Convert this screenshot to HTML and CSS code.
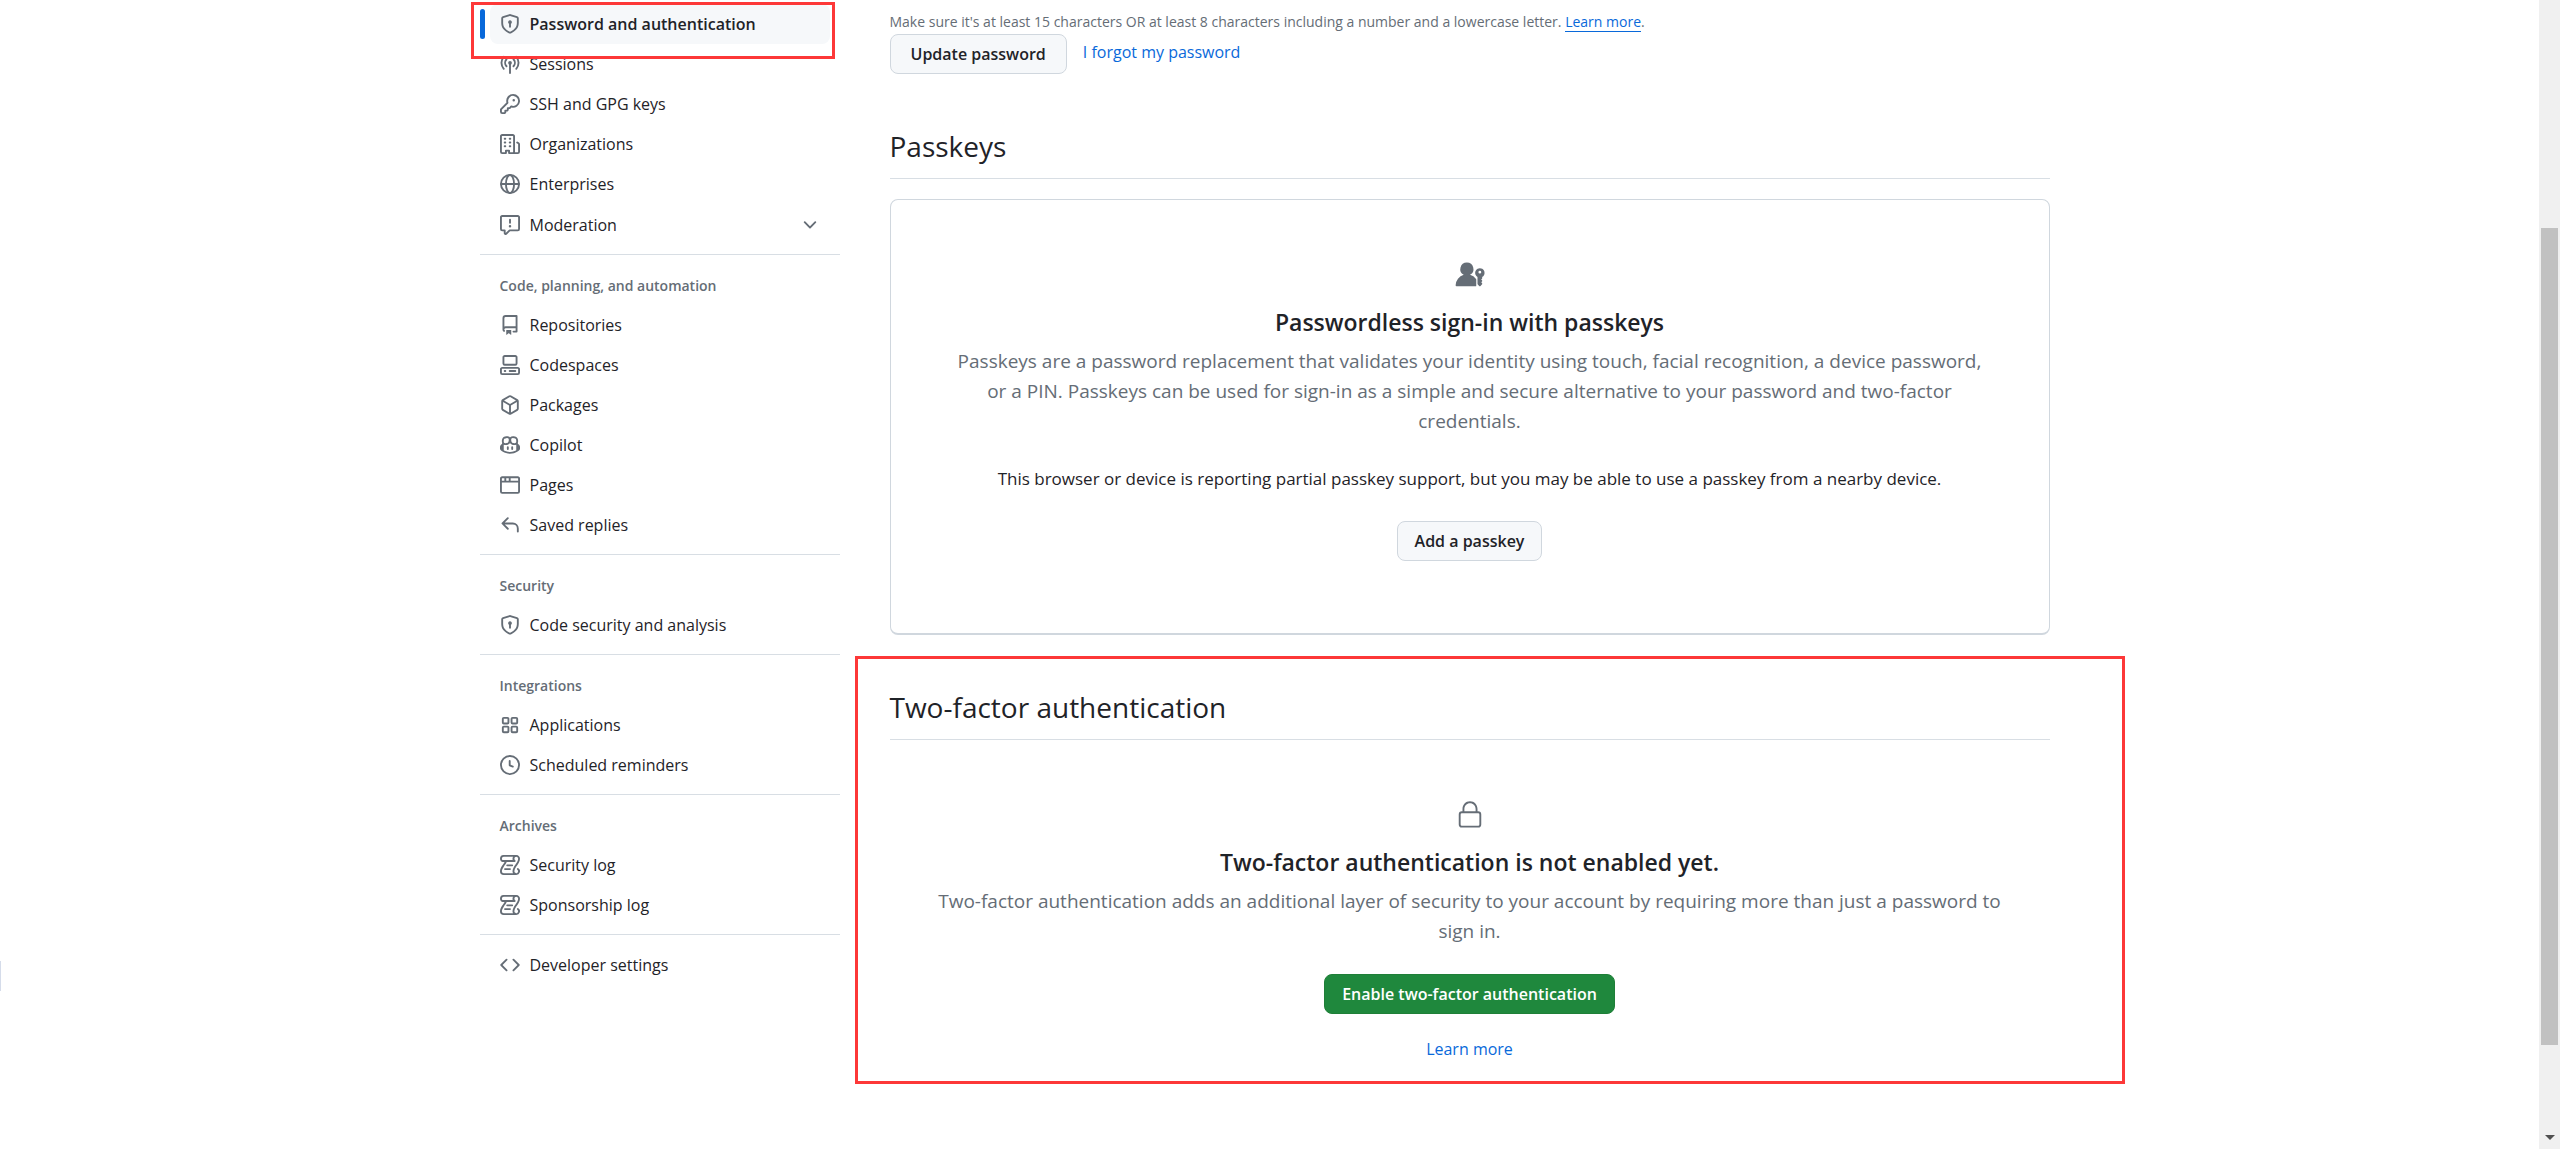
FILE: index.html
```html
<!DOCTYPE html>
<html lang="en">
<head>
    <meta charset="UTF-8">
    <meta name="viewport" content="width=device-width, initial-scale=1.0">
    <title>Password and authentication</title>
    <link rel="stylesheet" href="styles.css">
</head>
<body>
    <div class="page">
        <div class="edge-tab"></div>
        <div class="layout">
            <nav class="sidebar" aria-label="Settings">
                <div class="highlight highlight-nav"></div>
                <ul class="nav-list">
                    <li class="active">
                        <a class="nav-item" href="#">
                            <svg class="icon" viewBox="0 0 16 16"><path d="m8.533.133 5.25 1.68A1.75 1.75 0 0 1 15 3.48V7c0 1.566-.32 3.182-1.303 4.682-.983 1.498-2.585 2.813-5.032 3.855a1.697 1.697 0 0 1-1.33 0c-2.447-1.042-4.049-2.357-5.032-3.855C1.32 10.182 1 8.566 1 7V3.48a1.755 1.755 0 0 1 1.217-1.667l5.25-1.68a1.748 1.748 0 0 1 1.066 0Zm-.61 1.429.001.001-5.25 1.68a.251.251 0 0 0-.174.237V7c0 1.36.275 2.666 1.057 3.859.784 1.194 2.121 2.342 4.366 3.298a.196.196 0 0 0 .154 0c2.245-.957 3.582-2.103 4.366-3.297C13.225 9.666 13.5 8.358 13.5 7V3.48a.25.25 0 0 0-.174-.238l-5.25-1.68a.25.25 0 0 0-.153 0ZM9.5 6.5c0 .536-.286 1.032-.75 1.3v2.45a.75.75 0 0 1-1.5 0V7.8A1.5 1.5 0 1 1 9.5 6.5Z"/></svg>
                            Password and authentication
                        </a>
                    </li>
                    <li>
                        <a class="nav-item" href="#">
                            <svg class="icon line" viewBox="0 0 16 16"><path d="M3 2.2a7.2 7.2 0 0 0 0 9.6M13 2.2a7.2 7.2 0 0 1 0 9.6M5.2 4.2a4.1 4.1 0 0 0 0 5.6M10.8 4.2a4.1 4.1 0 0 1 0 5.6M8 7.5v7.7"/><circle class="solid" cx="8" cy="7" r="1.5"/></svg>
                            Sessions
                        </a>
                    </li>
                    <li>
                        <a class="nav-item" href="#">
                            <svg class="icon" viewBox="0 0 16 16"><path d="M10.5 0a5.499 5.499 0 1 1-1.288 10.848l-.932.932a.749.749 0 0 1-.53.22H7v.75a.749.749 0 0 1-.22.53l-.5.5a.749.749 0 0 1-.53.22H5v.75a.749.749 0 0 1-.22.53l-.5.5a.749.749 0 0 1-.53.22h-2A1.75 1.75 0 0 1 0 14.25v-2c0-.199.079-.389.22-.53l4.932-4.932A5.5 5.5 0 0 1 10.5 0Zm-4 5.5c-.001.431.069.86.205 1.269a.75.75 0 0 1-.181.768L1.5 12.56v1.69c0 .138.112.25.25.25h1.69l.06-.06v-1.19a.75.75 0 0 1 .75-.75h1.19l.06-.06v-1.19a.75.75 0 0 1 .75-.75h1.19l1.023-1.025a.75.75 0 0 1 .768-.18A4 4 0 1 0 6.5 5.5ZM11 6a1 1 0 1 1 0-2 1 1 0 0 1 0 2Z"/></svg>
                            SSH and GPG keys
                        </a>
                    </li>
                    <li>
                        <a class="nav-item" href="#">
                            <svg class="icon" viewBox="0 0 16 16"><path d="M1.75 16A1.75 1.75 0 0 1 0 14.25V1.75C0 .784.784 0 1.75 0h8.5C11.216 0 12 .784 12 1.75v12.5c0 .085-.006.168-.018.25h2.268a.25.25 0 0 0 .25-.25V8.285a.25.25 0 0 0-.111-.208l-1.055-.703a.749.749 0 1 1 .832-1.248l1.055.703c.487.325.779.871.779 1.456v5.965A1.75 1.75 0 0 1 14.25 16h-3.5a.766.766 0 0 1-.197-.026c-.099.017-.2.026-.303.026h-3a.75.75 0 0 1-.75-.75V14h-1v1.25a.75.75 0 0 1-.75.75Zm-.25-1.75c0 .138.112.25.25.25H4v-1.25a.75.75 0 0 1 .75-.75h2.5a.75.75 0 0 1 .75.75v1.25h2.25a.25.25 0 0 0 .25-.25V1.75a.25.25 0 0 0-.25-.25h-8.5a.25.25 0 0 0-.25.25ZM3.75 6h.5a.75.75 0 0 1 0 1.5h-.5a.75.75 0 0 1 0-1.5ZM3 3.75A.75.75 0 0 1 3.75 3h.5a.75.75 0 0 1 0 1.5h-.5A.75.75 0 0 1 3 3.75Zm4 3A.75.75 0 0 1 7.75 6h.5a.75.75 0 0 1 0 1.5h-.5A.75.75 0 0 1 7 6.75ZM7.75 3h.5a.75.75 0 0 1 0 1.5h-.5a.75.75 0 0 1 0-1.5ZM3 9.75A.75.75 0 0 1 3.75 9h.5a.75.75 0 0 1 0 1.5h-.5A.75.75 0 0 1 3 9.75ZM7.75 9h.5a.75.75 0 0 1 0 1.5h-.5a.75.75 0 0 1 0-1.5Z"/></svg>
                            Organizations
                        </a>
                    </li>
                    <li>
                        <a class="nav-item" href="#">
                            <svg class="icon line" viewBox="0 0 16 16"><circle cx="8" cy="8" r="7.25"/><ellipse cx="8" cy="8" rx="3.25" ry="7.25"/><path d="M1 8h14"/></svg>
                            Enterprises
                        </a>
                    </li>
                    <li>
                        <button class="nav-item nav-toggle" type="button" aria-expanded="false">
                            <svg class="icon" viewBox="0 0 16 16"><path d="M0 1.75C0 .784.784 0 1.75 0h12.5C15.216 0 16 .784 16 1.75v9.5A1.75 1.75 0 0 1 14.25 13H8.06l-2.573 2.573A1.458 1.458 0 0 1 3 14.543V13H1.75A1.75 1.75 0 0 1 0 11.25Zm1.75-.25a.25.25 0 0 0-.25.25v9.5c0 .138.112.25.25.25h2a.75.75 0 0 1 .75.75v2.19l2.72-2.72a.749.749 0 0 1 .53-.22h6.5a.25.25 0 0 0 .25-.25v-9.5a.25.25 0 0 0-.25-.25Zm7 2.25v2.5a.75.75 0 0 1-1.5 0v-2.5a.75.75 0 0 1 1.5 0ZM9 9a1 1 0 1 1-2 0 1 1 0 0 1 2 0Z"/></svg>
                            Moderation
                            <svg class="icon chevron" viewBox="0 0 16 16"><path d="M12.78 5.22a.749.749 0 0 1 0 1.06l-4.25 4.25a.749.749 0 0 1-1.06 0L3.22 6.28a.749.749 0 1 1 1.06-1.06L8 8.939l3.72-3.719a.749.749 0 0 1 1.06 0Z"/></svg>
                        </button>
                    </li>
                </ul>

                <h3 class="nav-title">Code, planning, and automation</h3>
                <ul class="nav-list">
                    <li>
                        <a class="nav-item" href="#">
                            <svg class="icon" viewBox="0 0 16 16"><path d="M2 2.5A2.5 2.5 0 0 1 4.5 0h8.75a.75.75 0 0 1 .75.75v12.5a.75.75 0 0 1-.75.75h-2.5a.75.75 0 0 1 0-1.5h1.75v-2h-8a1 1 0 0 0-.714 1.7.75.75 0 1 1-1.072 1.05A2.495 2.495 0 0 1 2 11.5Zm10.5-1h-8a1 1 0 0 0-1 1v6.708A2.486 2.486 0 0 1 4.5 9h8ZM5 12.25a.25.25 0 0 1 .25-.25h3.5a.25.25 0 0 1 .25.25v3.25a.25.25 0 0 1-.4.2l-1.45-1.087a.249.249 0 0 0-.3 0L5.4 15.7a.25.25 0 0 1-.4-.2Z"/></svg>
                            Repositories
                        </a>
                    </li>
                    <li>
                        <a class="nav-item" href="#">
                            <svg class="icon" viewBox="0 0 16 16"><path d="M0 11.25c0-.966.784-1.75 1.75-1.75h12.5c.966 0 1.75.784 1.75 1.75v3A1.75 1.75 0 0 1 14.25 16H1.75A1.75 1.75 0 0 1 0 14.25Zm2-9.5C2 .784 2.784 0 3.75 0h8.5C13.216 0 14 .784 14 1.75v5a1.75 1.75 0 0 1-1.75 1.75h-8.5A1.75 1.75 0 0 1 2 6.75Zm1.75-.25a.25.25 0 0 0-.25.25v5c0 .138.112.25.25.25h8.5a.25.25 0 0 0 .25-.25v-5a.25.25 0 0 0-.25-.25Zm-2 9.5a.25.25 0 0 0-.25.25v3c0 .138.112.25.25.25h12.5a.25.25 0 0 0 .25-.25v-3a.25.25 0 0 0-.25-.25Z"/><path d="M7 12.75a.75.75 0 0 1 .75-.75h4.5a.75.75 0 0 1 0 1.5h-4.5a.75.75 0 0 1-.75-.75Zm-4 0a.75.75 0 0 1 .75-.75h.5a.75.75 0 0 1 0 1.5h-.5a.75.75 0 0 1-.75-.75Z"/></svg>
                            Codespaces
                        </a>
                    </li>
                    <li>
                        <a class="nav-item" href="#">
                            <svg class="icon" viewBox="0 0 16 16"><path d="m8.878.392 5.25 3.045c.54.314.872.89.872 1.514v6.098a1.75 1.75 0 0 1-.872 1.514l-5.25 3.045a1.75 1.75 0 0 1-1.756 0l-5.25-3.045A1.75 1.75 0 0 1 1 11.049V4.951c0-.624.332-1.201.872-1.514L7.122.392a1.75 1.75 0 0 1 1.756 0ZM7.875 1.69l-4.63 2.685L8 7.133l4.755-2.758-4.63-2.685a.248.248 0 0 0-.25 0ZM2.5 5.677v5.372c0 .09.047.171.125.216l4.625 2.683V8.432Zm6.25 8.271 4.625-2.683a.25.25 0 0 0 .125-.216V5.677L8.75 8.432Z"/></svg>
                            Packages
                        </a>
                    </li>
                    <li>
                        <a class="nav-item" href="#">
                            <svg class="icon" viewBox="0 0 16 16"><path d="M7.998 15.035c-4.562 0-7.873-2.914-7.998-3.749V9.338c.085-.628.677-1.686 1.588-2.065.013-.07.024-.143.036-.218.029-.183.06-.384.126-.612-.201-.508-.254-1.084-.254-1.656 0-.87.128-1.769.693-2.484.579-.733 1.494-1.124 2.724-1.261 1.206-.134 2.262.034 2.944.765.05.053.096.108.139.165.044-.057.094-.112.143-.165.682-.731 1.738-.899 2.944-.765 1.23.137 2.145.528 2.724 1.261.566.715.693 1.614.693 2.484 0 .572-.053 1.148-.254 1.656.066.228.098.429.126.612.012.076.024.148.037.218.924.385 1.522 1.471 1.591 2.095v1.872c0 .766-3.351 3.795-8.002 3.795Zm0-1.485c2.28 0 4.584-1.11 5.002-1.433V7.862l-.023-.116c-.49.21-1.075.291-1.727.291-1.146 0-2.059-.327-2.71-.991A3.222 3.222 0 0 1 8 6.303a3.24 3.24 0 0 1-.544.743c-.65.664-1.563.991-2.71.991-.652 0-1.236-.081-1.727-.291l-.023.116v4.255c.419.323 2.722 1.433 5.002 1.433ZM6.762 2.83c-.193-.206-.637-.413-1.682-.297-1.019.113-1.479.404-1.713.7-.247.312-.369.789-.369 1.554 0 .793.129 1.171.308 1.371.162.181.519.379 1.442.379.853 0 1.339-.235 1.638-.54.315-.322.527-.827.617-1.553.117-.935-.037-1.395-.241-1.614Zm4.155-.297c-1.044-.116-1.488.091-1.681.297-.204.219-.359.679-.242 1.614.091.726.303 1.231.618 1.553.299.305.784.54 1.638.54.922 0 1.28-.198 1.442-.379.179-.2.308-.578.308-1.371 0-.765-.123-1.242-.37-1.554-.233-.296-.693-.587-1.713-.7Z"/><path d="M6.25 9.037a.75.75 0 0 1 .75.75v1.501a.75.75 0 0 1-1.5 0V9.787a.75.75 0 0 1 .75-.75Zm4.25.75v1.501a.75.75 0 0 1-1.5 0V9.787a.75.75 0 0 1 1.5 0Z"/></svg>
                            Copilot
                        </a>
                    </li>
                    <li>
                        <a class="nav-item" href="#">
                            <svg class="icon" viewBox="0 0 16 16"><path d="M0 2.75C0 1.784.784 1 1.75 1h12.5c.966 0 1.75.784 1.75 1.75v10.5A1.75 1.75 0 0 1 14.25 15H1.75A1.75 1.75 0 0 1 0 13.25ZM14.5 6h-13v7.25c0 .138.112.25.25.25h12.5a.25.25 0 0 0 .25-.25Zm-6-3.5v2h6V2.75a.25.25 0 0 0-.25-.25ZM5 2.5v2h2v-2Zm-3.25 0a.25.25 0 0 0-.25.25V4.5h2v-2Z"/></svg>
                            Pages
                        </a>
                    </li>
                    <li>
                        <a class="nav-item" href="#">
                            <svg class="icon" viewBox="0 0 16 16"><path d="M6.78 1.97a.75.75 0 0 1 0 1.06L3.81 6h6.44A4.75 4.75 0 0 1 15 10.75v2.5a.75.75 0 0 1-1.5 0v-2.5a3.25 3.25 0 0 0-3.25-3.25H3.81l2.97 2.97a.749.749 0 0 1-1.06 1.06L1.47 7.28a.75.75 0 0 1 0-1.06l4.25-4.25a.75.75 0 0 1 1.06 0Z"/></svg>
                            Saved replies
                        </a>
                    </li>
                </ul>

                <h3 class="nav-title">Security</h3>
                <ul class="nav-list">
                    <li>
                        <a class="nav-item" href="#">
                            <svg class="icon" viewBox="0 0 16 16"><path d="m8.533.133 5.25 1.68A1.75 1.75 0 0 1 15 3.48V7c0 1.566-.32 3.182-1.303 4.682-.983 1.498-2.585 2.813-5.032 3.855a1.697 1.697 0 0 1-1.33 0c-2.447-1.042-4.049-2.357-5.032-3.855C1.32 10.182 1 8.566 1 7V3.48a1.755 1.755 0 0 1 1.217-1.667l5.25-1.68a1.748 1.748 0 0 1 1.066 0Zm-.61 1.429.001.001-5.25 1.68a.251.251 0 0 0-.174.237V7c0 1.36.275 2.666 1.057 3.859.784 1.194 2.121 2.342 4.366 3.298a.196.196 0 0 0 .154 0c2.245-.957 3.582-2.103 4.366-3.297C13.225 9.666 13.5 8.358 13.5 7V3.48a.25.25 0 0 0-.174-.238l-5.25-1.68a.25.25 0 0 0-.153 0ZM9.5 6.5c0 .536-.286 1.032-.75 1.3v2.45a.75.75 0 0 1-1.5 0V7.8A1.5 1.5 0 1 1 9.5 6.5Z"/></svg>
                            Code security and analysis
                        </a>
                    </li>
                </ul>

                <h3 class="nav-title">Integrations</h3>
                <ul class="nav-list">
                    <li>
                        <a class="nav-item" href="#">
                            <svg class="icon line" viewBox="0 0 16 16"><rect x="2.25" y="2.25" width="4.5" height="4.5" rx=".8"/><rect x="9.25" y="2.25" width="4.5" height="4.5" rx=".8"/><rect x="2.25" y="9.25" width="4.5" height="4.5" rx=".8"/><rect x="9.25" y="9.25" width="4.5" height="4.5" rx=".8"/></svg>
                            Applications
                        </a>
                    </li>
                    <li>
                        <a class="nav-item" href="#">
                            <svg class="icon" viewBox="0 0 16 16"><path d="M8 0a8 8 0 1 1 0 16A8 8 0 0 1 8 0ZM1.5 8a6.5 6.5 0 1 0 13 0 6.5 6.5 0 0 0-13 0Zm7-3.25v2.992l2.028.812a.75.75 0 0 1-.557 1.392l-2.5-1A.751.751 0 0 1 7 8.25v-3.5a.75.75 0 0 1 1.5 0Z"/></svg>
                            Scheduled reminders
                        </a>
                    </li>
                </ul>

                <h3 class="nav-title">Archives</h3>
                <ul class="nav-list">
                    <li>
                        <a class="nav-item" href="#">
                            <svg class="icon" viewBox="0 0 16 16"><path d="M5 8.25a.75.75 0 0 1 .75-.75h4a.75.75 0 0 1 0 1.5h-4A.75.75 0 0 1 5 8.25ZM4 10.5A.75.75 0 0 0 4 12h4a.75.75 0 0 0 0-1.5H4Z"/><path d="M13-.005c1.654 0 3 1.328 3 3 0 .982-.338 1.933-.783 2.818-.443.879-1.028 1.758-1.582 2.588l-.011.017c-.568.853-1.104 1.659-1.501 2.446-.398.789-.623 1.494-.623 2.136a1.5 1.5 0 1 0 2.333-1.248.75.75 0 0 1 .834-1.246A3 3 0 0 1 13 16H3a3 3 0 0 1-3-3c0-1.582.891-3.135 1.777-4.506.209-.322.418-.637.623-.946.473-.709.923-1.386 1.287-2.048H2.51c-.576 0-1.381-.133-1.907-.783A2.68 2.68 0 0 1 0 2.995a3 3 0 0 1 3-3Zm0 1.5a1.5 1.5 0 0 0-1.5 1.5c0 .476.223.834.667 1.132A.75.75 0 0 1 11.75 5.5H5.368c-.467 1.003-1.141 2.015-1.773 2.963-.192.289-.381.571-.558.845C2.13 10.711 1.5 11.916 1.5 13A1.5 1.5 0 0 0 3 14.5h7.401A2.989 2.989 0 0 1 10 13c0-.979.338-1.928.784-2.812.441-.874 1.023-1.748 1.575-2.576l.017-.026c.568-.853 1.103-1.658 1.501-2.448.398-.79.623-1.497.623-2.143 0-.838-.669-1.5-1.5-1.5Zm-10 0a1.5 1.5 0 0 0-1.5 1.5c0 .321.1.569.27.778.097.12.325.227.74.227h7.674A2.737 2.737 0 0 1 10 2.995c0-.546.146-1.059.401-1.5Z"/></svg>
                            Security log
                        </a>
                    </li>
                    <li>
                        <a class="nav-item" href="#">
                            <svg class="icon" viewBox="0 0 16 16"><path d="M5 8.25a.75.75 0 0 1 .75-.75h4a.75.75 0 0 1 0 1.5h-4A.75.75 0 0 1 5 8.25ZM4 10.5A.75.75 0 0 0 4 12h4a.75.75 0 0 0 0-1.5H4Z"/><path d="M13-.005c1.654 0 3 1.328 3 3 0 .982-.338 1.933-.783 2.818-.443.879-1.028 1.758-1.582 2.588l-.011.017c-.568.853-1.104 1.659-1.501 2.446-.398.789-.623 1.494-.623 2.136a1.5 1.5 0 1 0 2.333-1.248.75.75 0 0 1 .834-1.246A3 3 0 0 1 13 16H3a3 3 0 0 1-3-3c0-1.582.891-3.135 1.777-4.506.209-.322.418-.637.623-.946.473-.709.923-1.386 1.287-2.048H2.51c-.576 0-1.381-.133-1.907-.783A2.68 2.68 0 0 1 0 2.995a3 3 0 0 1 3-3Zm0 1.5a1.5 1.5 0 0 0-1.5 1.5c0 .476.223.834.667 1.132A.75.75 0 0 1 11.75 5.5H5.368c-.467 1.003-1.141 2.015-1.773 2.963-.192.289-.381.571-.558.845C2.13 10.711 1.5 11.916 1.5 13A1.5 1.5 0 0 0 3 14.5h7.401A2.989 2.989 0 0 1 10 13c0-.979.338-1.928.784-2.812.441-.874 1.023-1.748 1.575-2.576l.017-.026c.568-.853 1.103-1.658 1.501-2.448.398-.79.623-1.497.623-2.143 0-.838-.669-1.5-1.5-1.5Zm-10 0a1.5 1.5 0 0 0-1.5 1.5c0 .321.1.569.27.778.097.12.325.227.74.227h7.674A2.737 2.737 0 0 1 10 2.995c0-.546.146-1.059.401-1.5Z"/></svg>
                            Sponsorship log
                        </a>
                    </li>
                </ul>

                <ul class="nav-list nav-list-last">
                    <li>
                        <a class="nav-item" href="#">
                            <svg class="icon" viewBox="0 0 16 16"><path d="m11.28 3.22 4.25 4.25a.75.75 0 0 1 0 1.06l-4.25 4.25a.749.749 0 0 1-1.06-1.06L13.94 8l-3.72-3.72a.749.749 0 0 1 1.06-1.06Zm-6.56 0a.751.751 0 0 1 1.06 1.06L2.06 8l3.72 3.72a.749.749 0 0 1-1.06 1.06L.47 8.53a.75.75 0 0 1 0-1.06Z"/></svg>
                            Developer settings
                        </a>
                    </li>
                </ul>
            </nav>

            <main class="content">
                <p class="note">Make sure it's at least 15 characters OR at least 8 characters including a number and a lowercase letter. <a href="#">Learn more</a>.</p>
                <div class="password-actions">
                    <button class="btn" type="button">Update password</button>
                    <a class="link" href="#">I forgot my password</a>
                </div>

                <section class="section">
                    <h2 class="section-title">Passkeys</h2>
                    <div class="blankslate card">
                        <svg class="blankslate-icon" viewBox="0 0 24 24"><path d="M9.496 2a5.25 5.25 0 0 0-2.519 9.857A9.006 9.006 0 0 0 .5 20.228a.751.751 0 0 0 .728.772h5.257c3.338.001 6.677.002 10.015 0a.5.5 0 0 0 .5-.5v-4.669a.95.95 0 0 0-.171-.551 9.02 9.02 0 0 0-4.814-3.423A5.25 5.25 0 0 0 9.496 2Z"/><path d="M23.625 10.313c0 1.31-.672 2.464-1.691 3.134a.398.398 0 0 0-.184.33v.886a.372.372 0 0 1-.11.265l-.534.534a.188.188 0 0 0 0 .265l.534.534c.071.07.11.166.11.265v.347a.374.374 0 0 1-.11.265l-.534.534a.188.188 0 0 0 0 .265l.534.534a.37.37 0 0 1 .11.265v.431a.379.379 0 0 1-.097.253l-1.2 1.319a.781.781 0 0 1-1.156 0l-1.2-1.319a.379.379 0 0 1-.097-.253v-5.39a.398.398 0 0 0-.184-.33 3.75 3.75 0 1 1 5.809-3.134ZM21 9.75a1.125 1.125 0 1 0-2.25 0 1.125 1.125 0 0 0 2.25 0Z"/></svg>
                        <h3 class="blankslate-title">Passwordless sign-in with passkeys</h3>
                        <p class="blankslate-text">Passkeys are a password replacement that validates your identity using touch, facial recognition, a device password, or a PIN. Passkeys can be used for sign-in as a simple and secure alternative to your password and two-factor credentials.</p>
                        <p class="support">This browser or device is reporting partial passkey support, but you may be able to use a passkey from a nearby device.</p>
                        <button class="btn" type="button">Add a passkey</button>
                    </div>
                </section>

                <section class="section">
                    <div class="highlight highlight-section"></div>
                    <h2 class="section-title">Two-factor authentication</h2>
                    <div class="blankslate">
                        <svg class="blankslate-icon" viewBox="0 0 24 24"><path d="M6 9V7.25C6 3.845 8.503 1 12 1s6 2.845 6 6.25V9h.5a2.5 2.5 0 0 1 2.5 2.5v8a2.5 2.5 0 0 1-2.5 2.5h-13A2.5 2.5 0 0 1 3 19.5v-8A2.5 2.5 0 0 1 5.5 9Zm-1.5 2.5v8a1 1 0 0 0 1 1h13a1 1 0 0 0 1-1v-8a1 1 0 0 0-1-1h-13a1 1 0 0 0-1 1Zm3-4.25V9h9V7.25c0-2.67-1.922-4.75-4.5-4.75-2.578 0-4.5 2.08-4.5 4.75Z"/></svg>
                        <h3 class="blankslate-title">Two-factor authentication is not enabled yet.</h3>
                        <p class="blankslate-text">Two-factor authentication adds an additional layer of security to your account by requiring more than just a password to sign in.</p>
                        <button class="btn btn-primary" type="button">Enable two-factor authentication</button>
                        <a class="link learn-more" href="#">Learn more</a>
                    </div>
                </section>
            </main>
        </div>
    </div>

    <div class="scrollbar">
        <div class="scroll-thumb"></div>
        <svg class="scroll-arrow" viewBox="0 0 10 5"><path d="M0 0h10L5 5Z"/></svg>
    </div>
</body>
</html>
```

FILE: styles.css
```css
* {
    box-sizing: border-box;
}

body {
    margin: 0;
    display: flex;
    height: 100vh;
    overflow: hidden;
    background-color: #fff;
    color: #1f2328;
    font-family: "Open Sans", "Noto Sans", sans-serif;
    font-size: 16px;
    line-height: 30px;
}

h2, h3, p, ul {
    margin: 0;
    padding: 0;
}

button {
    font-family: inherit;
    color: inherit;
    cursor: pointer;
}

a {
    color: #0969da;
    text-decoration: none;
}

.page {
    position: relative;
    flex: 1;
    overflow: hidden;
}

.edge-tab {
    position: absolute;
    left: 0;
    top: 961px;
    width: 1px;
    height: 30px;
    background-color: #d5dcea;
}

.layout {
    display: flex;
    gap: 50px;
    max-width: 1580px;
    margin: 0 auto;
    padding-right: 10px;
}

/* sidebar */
.sidebar {
    position: relative;
    flex: 0 0 360px;
    padding-top: 4px;
}

.nav-list {
    list-style: none;
    padding: 0 10px;
}

.nav-list li {
    position: relative;
}

.nav-item {
    display: flex;
    align-items: center;
    gap: 10px;
    width: 100%;
    height: 40px;
    padding: 0 10px;
    border: none;
    border-radius: 8px;
    background: none;
    color: #1f2328;
    font-size: 16px;
    text-align: left;
}

.nav-toggle {
    height: 41px;
}

.active .nav-item {
    background-color: #f6f8fa;
    font-weight: 600;
}

.active::before {
    content: "";
    position: absolute;
    left: -10px;
    top: 5px;
    width: 5px;
    height: 30px;
    border-radius: 4px;
    background-color: #0969da;
}

.nav-title {
    margin-top: 9px;
    padding: 21px 20px 9px;
    border-top: 1px solid #d8dee4;
    color: #656d76;
    font-size: 14px;
    font-weight: 600;
    line-height: 20px;
}

.nav-list-last {
    margin-top: 9px;
    padding-top: 10px;
    border-top: 1px solid #d8dee4;
}

.icon {
    flex: none;
    width: 20px;
    height: 20px;
    fill: #656d76;
}

.line {
    fill: none;
    stroke: #656d76;
    stroke-width: 1.5;
    stroke-linecap: round;
}

.solid {
    fill: #656d76;
    stroke: none;
}

.chevron {
    margin-left: auto;
}

/* main column */
.content {
    flex: 1;
    min-width: 0;
    padding-top: 10px;
}

.note {
    color: #656d76;
    font-size: 14px;
    line-height: 23px;
}

.note a {
    border-bottom: 1px solid #0969da;
}

.password-actions {
    display: flex;
    align-items: flex-start;
    gap: 16px;
    margin-top: 1px;
}

.password-actions .link {
    line-height: 36px;
}

.link {
    font-size: 16px;
}

.btn {
    height: 40px;
    padding: 0 17px;
    border: 1px solid #d0d7de;
    border-radius: 8px;
    background-color: #f6f8fa;
    font-size: 16px;
    font-weight: 600;
}

.password-actions .btn {
    padding: 0 20px;
}

.btn-primary {
    border-color: #1f7f38;
    background-color: #1f883d;
    color: #fff;
}

.section {
    position: relative;
    margin-top: 51px;
}

.section-title {
    padding-bottom: 10px;
    border-bottom: 1px solid #d8dee4;
    font-size: 28px;
    font-weight: 400;
    line-height: 43px;
}

.blankslate {
    display: flex;
    flex-direction: column;
    align-items: center;
    padding: 60px 40px 0;
    text-align: center;
}

.card {
    margin-top: 20px;
    padding: 60px 60px 72px;
    border: 1px solid #d0d7de;
    border-bottom-width: 2px;
    border-radius: 8px;
}

.blankslate-icon {
    width: 30px;
    height: 30px;
    fill: #656d76;
}

.blankslate-title {
    margin: 12px 0 4px;
    font-size: 23px;
    font-weight: 600;
    line-height: 40px;
}

.blankslate-text {
    margin-bottom: 28px;
    color: #656d76;
    font-size: 19px;
}

.support {
    margin-bottom: 27px;
    font-size: 17px;
}

.learn-more {
    margin-top: 20px;
}

/* red marker frames */
.highlight {
    position: absolute;
    z-index: 1;
    border: 3px solid #fd3838;
    pointer-events: none;
}

.highlight-nav {
    left: -9px;
    right: 5px;
    top: 2px;
    height: 57px;
}

.highlight-section {
    left: -35px;
    right: -75px;
    top: -30px;
    bottom: -20px;
}

/* scrollbar */
.scrollbar {
    display: grid;
    grid-template-rows: 228fr 817fr 104fr;
    flex: 0 0 21px;
    justify-items: center;
    background-color: #f0f0f0;
}

.scroll-thumb {
    grid-row: 2;
    width: 17px;
    background-color: #c1c1c1;
}

.scroll-arrow {
    grid-row: 3;
    align-self: end;
    width: 10px;
    height: 5px;
    margin-bottom: 9px;
    fill: #505050;
}
```
